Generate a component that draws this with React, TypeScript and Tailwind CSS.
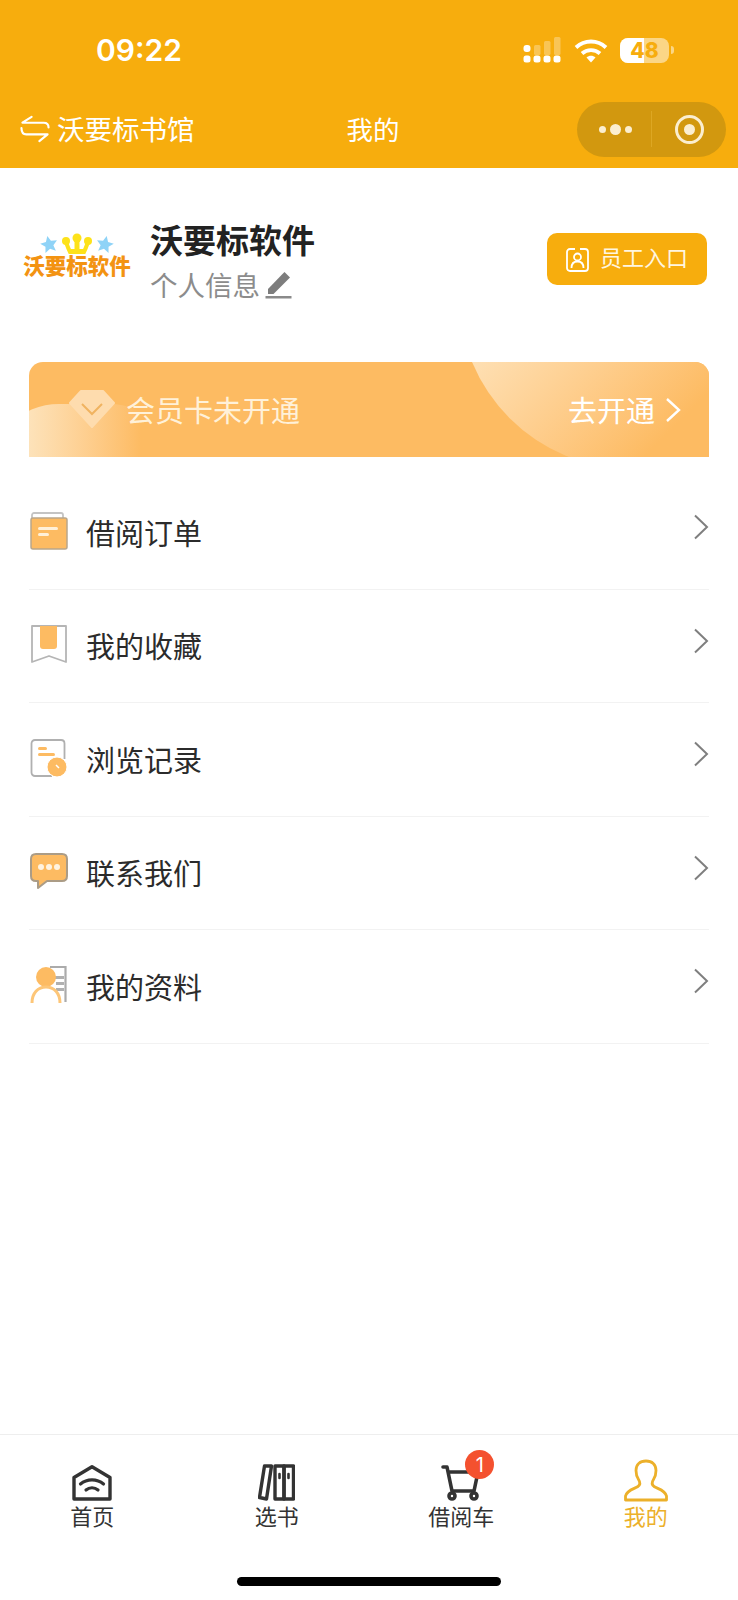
// ─── Status bar drawings ──────────────────────────────────────────────────────

function SignalIcon() {
  return (
    <svg width="40" height="26" viewBox="0 0 40 26">
      <g fill="#fff" opacity="0.3">
        <rect x="12" y="8" width="6.500" height="10" rx="1.500" />
        <rect x="22" y="4" width="6.500" height="14" rx="1.500" />
        <rect x="32" y="0" width="6.500" height="18" rx="1.500" />
      </g>
      <g fill="#fff">
        <rect x="1.500" y="8" width="7" height="7" rx="3" />
        <rect x="1.500" y="18.500" width="7" height="7" rx="2.500" />
        <rect x="11.500" y="18.500" width="7" height="7" rx="2.500" />
        <rect x="21.500" y="18.500" width="7" height="7" rx="2.500" />
        <rect x="31.500" y="18.500" width="7" height="7" rx="2.500" />
      </g>
    </svg>
  );
}

function WifiIcon() {
  return (
    <svg width="34" height="25" viewBox="0 0 34 25" fill="none" stroke="#fff" strokeWidth="3.800">
      <path d="M2 9.500C10.500 1.500 23.500 1.500 32 9.500" />
      <path d="M8 15.500C13 11 21 11 26 15.500" />
      <path d="M12.500 19.500L17 24.500L21.500 19.500C19 17.200 15 17.200 12.500 19.500Z" fill="#fff" stroke="none" />
    </svg>
  );
}

function Battery() {
  return (
    <div className="flex items-center gap-[2px]">
      <div className="relative h-[25px] w-[49px] overflow-hidden rounded-[8px] bg-white/50">
        <div className="h-full w-[24px] bg-white" />
        <span className="absolute inset-0 flex items-center justify-center text-[21px] font-extrabold leading-none text-[#f7ad0d] [font-family:Inter,sans-serif]">
          48
        </span>
      </div>
      <div className="h-[8px] w-[3px] rounded-r-full bg-white/50" />
    </div>
  );
}

function BackHomeIcon() {
  return (
    <svg width="30" height="28" viewBox="0 0 31 28" fill="none" stroke="#fff" strokeWidth="2.200" strokeLinecap="round" strokeLinejoin="round">
      <path d="M12 1.500L2.500 7.500H24.500C27.500 7.500 29.500 9.500 29.500 12.500" />
      <path d="M1.500 13C1.500 17 3.500 19.500 6.500 19.500H28.500L20 26.500" />
    </svg>
  );
}

// ─── Logo ─────────────────────────────────────────────────────────────────────

function Star({ rotate }: { rotate: number }) {
  return (
    <svg width="18" height="18" viewBox="0 0 24 24" style={{ transform: `rotate(${rotate}deg)` }}>
      <path d="M12 1l3.400 7.400 8 .9-6 5.400 1.700 8L12 18.600l-7.100 4.100 1.700-8-6-5.400 8-.9z" fill="#8fd3f7" />
    </svg>
  );
}

function Logo() {
  return (
    <div className="flex w-[108px] flex-col items-center">
      <div className="flex items-center gap-[3px]">
        <Star rotate={-12} />
        <svg width="32" height="21" viewBox="0 0 32 21">
          <path d="M5 9C7 15 8 17 9.500 20H22.500C24 17 25 15 27 9" stroke="#fde21a" strokeWidth="4" fill="none" />
          <path d="M8 18H24" stroke="#fde21a" strokeWidth="4" />
          <path d="M16 6V18" stroke="#fde21a" strokeWidth="5" />
          <circle cx="5" cy="8" r="4" fill="#fde21a" />
          <circle cx="16" cy="5" r="4.500" fill="#fde21a" />
          <circle cx="27" cy="8" r="4" fill="#fde21a" />
        </svg>
        <Star rotate={12} />
      </div>
      <span className="-mt-[1px] whitespace-nowrap text-[21.500px] font-black leading-[24px] text-[#f39312]">
        沃要标软件
      </span>
    </div>
  );
}

// ─── Menu icons ───────────────────────────────────────────────────────────────

function OrderIcon() {
  return (
    <svg width="38" height="38" viewBox="0 0 38 38" fill="none">
      <path d="M2 6V3C2 2 3 1 4 1H31C32 1 33 2 33 3V6" stroke="#c4c4c4" strokeWidth="1.800" />
      <rect x="1" y="6" width="36" height="31" rx="2" fill="#fdbb62" stroke="#b9a68a" strokeWidth="1.500" />
      <rect x="8" y="15" width="20" height="3" rx="1.500" fill="#fff0d8" />
      <rect x="8" y="21" width="11" height="3" rx="1.500" fill="#fff0d8" />
    </svg>
  );
}

function FavoriteIcon() {
  return (
    <svg width="38" height="38" viewBox="0 0 38 38" fill="none">
      <path d="M2 1H36V37L19 31L2 37Z" stroke="#b5b5b5" strokeWidth="1.800" strokeLinejoin="round" />
      <path d="M10 1H27V21C27 23 26 24 24 24H13C11 24 10 23 10 21Z" fill="#fdbb62" />
    </svg>
  );
}

function HistoryIcon() {
  return (
    <svg width="38" height="38" viewBox="0 0 38 38" fill="none">
      <path d="M22 37H5C3 37 1.500 35.500 1.500 33.500V4.500C1.500 2.500 3 1 5 1H31C33 1 34.500 2.500 34.500 4.500V20" stroke="#b0b0b0" strokeWidth="1.800" />
      <rect x="8" y="8" width="9" height="3" rx="1.500" fill="#fdbb62" />
      <rect x="8" y="14" width="17" height="3" rx="1.500" fill="#fdbb62" />
      <circle cx="27" cy="28" r="10" fill="#fdbb62" stroke="#fff" strokeWidth="1" />
      <path d="M26 26L29 29" stroke="#fff" strokeWidth="1.500" />
    </svg>
  );
}

function ContactIcon() {
  return (
    <svg width="38" height="36" viewBox="0 0 38 36" fill="none">
      <path d="M6 1H32C35 1 37 3 37 6V23C37 26 35 28 32 28H17L8 35V28H6C3 28 1 26 1 23V6C1 3 3 1 6 1Z" fill="#fdbb62" stroke="#ab9c86" strokeWidth="2" strokeLinejoin="round" />
      <circle cx="11" cy="14" r="3" fill="#fff3e0" />
      <circle cx="19" cy="14" r="3" fill="#fff3e0" />
      <circle cx="27" cy="14" r="3" fill="#fff3e0" />
    </svg>
  );
}

function ProfileIcon() {
  return (
    <svg width="38" height="38" viewBox="0 0 38 38" fill="none">
      <path d="M20 1H35.500V36" stroke="#ababab" strokeWidth="2.200" />
      <rect x="25" y="10" width="9" height="3" fill="#b0b0b0" />
      <rect x="26" y="16" width="8" height="3" fill="#b0b0b0" />
      <rect x="26" y="22" width="8" height="3" fill="#b0b0b0" />
      <circle cx="16" cy="11" r="10" fill="#fdbb62" />
      <path d="M2 37C2 27 8 21 16 21C24 21 30 27 30 37" stroke="#fdc678" strokeWidth="3" />
    </svg>
  );
}

function MenuChevron() {
  return (
    <svg className="mb-[10px] shrink-0" width="16" height="26" viewBox="0 0 16 26" fill="none" stroke="#7f7f7f" strokeWidth="2">
      <path d="M2 1.500L14 13L2 24.500" />
    </svg>
  );
}

// ─── Tab icons ────────────────────────────────────────────────────────────────

function HomeTabIcon() {
  return (
    <svg width="40" height="36" viewBox="0 0 40 36" fill="none" stroke="#333" strokeLinecap="round">
      <path d="M2 34V12.500L20 1.800L38 12.500V34Z" strokeWidth="3.400" strokeLinejoin="round" />
      <path d="M8.500 19C15 13.500 25 13.500 31.500 19" strokeWidth="3.200" />
      <path d="M14 25C17.500 22 22.500 22 26 25" strokeWidth="3.200" />
    </svg>
  );
}

function BooksTabIcon() {
  return (
    <svg width="37" height="37" viewBox="0 0 37 37" fill="none" stroke="#333" strokeWidth="3.400" strokeLinejoin="round">
      <path d="M6.500 2H13.500L8.500 35L1.500 33.500Z" />
      <rect x="17" y="2" width="9" height="33" />
      <rect x="26" y="2" width="9.500" height="33" />
      <path d="M21.500 10V14M30.500 10V14" strokeLinecap="round" strokeWidth="2.600" />
    </svg>
  );
}

function CartTabIcon() {
  return (
    <svg width="40" height="36" viewBox="0 0 40 36" fill="none" stroke="#333" strokeLinecap="round" strokeLinejoin="round">
      <path d="M2 2H6L11 26H33L37 7H8" strokeWidth="3.600" />
      <circle cx="11" cy="31" r="3" strokeWidth="3.600" />
      <circle cx="33" cy="31" r="3" strokeWidth="3.600" />
    </svg>
  );
}

function MeTabIcon({ color }: { color: string }) {
  return (
    <svg className="translate-y-[1px]" width="44" height="44" viewBox="0 0 44 44" fill="none" stroke={color} strokeWidth="2.800" strokeLinejoin="round">
      <path d="M22 3C16 3 12 6.500 12 12.500C12 16 12.500 18.500 14.500 21.500C16.500 24.500 16.500 26.500 14 28.500C10 31 3 32 1.500 38V42H42.500V38C41 32 34 31 30 28.500C27.500 26.500 27.500 24.500 29.500 21.500C31.500 18.500 32 16 32 12.500C32 6.500 28 3 22 3Z" />
    </svg>
  );
}

// ─── Data ─────────────────────────────────────────────────────────────────────

const MENU_ITEMS = [
  { label: "借阅订单", icon: OrderIcon },
  { label: "我的收藏", icon: FavoriteIcon },
  { label: "浏览记录", icon: HistoryIcon },
  { label: "联系我们", icon: ContactIcon },
  { label: "我的资料", icon: ProfileIcon },
];

// ─── Page ─────────────────────────────────────────────────────────────────────

export default function App() {
  return (
    <div className="flex h-[1600px] w-[738px] flex-col overflow-hidden bg-white [font-family:'Noto_Sans_CJK_SC',sans-serif]">
      {/* Status bar + nav bar */}
      <header className="h-[168px] shrink-0 bg-[#f7ad0d] text-white">
        <div className="flex h-[100px] items-start justify-between pl-[96px] pr-[64px] pt-[33px]">
          <span className="text-[30px] font-semibold leading-[35px] [font-family:Inter,sans-serif]">09:22</span>
          <div className="flex items-center gap-[12px] pt-[4px]">
            <SignalIcon />
            <WifiIcon />
            <Battery />
          </div>
        </div>
        <div className="grid h-[58px] grid-cols-[1fr_auto_1fr] items-center pl-[20px] pr-[12px]">
          <div className="flex items-center gap-[7px]">
            <BackHomeIcon />
            <span className="text-[27.500px] leading-none">沃要标书馆</span>
          </div>
          <span className="text-[26.500px] leading-none">我的</span>
          <div className="flex justify-end">
            <div className="flex h-[55px] w-[149px] items-center rounded-full bg-[#d2980f]">
              <div className="flex flex-1 items-center justify-center gap-[4px] pl-[2px]">
                <span className="h-[7px] w-[7px] rounded-full bg-[#fbeed0]" />
                <span className="h-[11px] w-[11px] rounded-full bg-[#fbeed0]" />
                <span className="h-[7px] w-[7px] rounded-full bg-[#fbeed0]" />
              </div>
              <div className="h-[36px] w-px bg-[#dda723]" />
              <div className="flex w-[74px] items-center justify-center">
                <div className="flex h-[29px] w-[29px] items-center justify-center rounded-full border-[3px] border-[#fbeed0]">
                  <span className="h-[11px] w-[11px] rounded-full bg-[#fbeed0]" />
                </div>
              </div>
            </div>
          </div>
        </div>
      </header>

      {/* Profile */}
      <section className="flex h-[194px] shrink-0 items-start pl-[23px] pr-[31px] pt-[52px]">
        <div className="pt-[13px]">
          <Logo />
        </div>
        <div className="ml-[19px] flex-1">
          <div className="text-[33px] font-bold leading-[38px] text-[#222]">沃要标软件</div>
          <div className="mt-[8px] flex items-center gap-[5px] text-[27.500px] leading-[36px] text-[#8c8c8c]">
            <span>个人信息</span>
            <svg width="27" height="30" viewBox="0 0 27 30">
              <path d="M3 20L17 5.500L19.500 3L25 8.500L22.500 11L8.500 25H3Z" fill="#7d7d7d" />
              <rect x="0.500" y="27" width="26" height="2.500" fill="#8a8a8a" />
            </svg>
          </div>
        </div>
        <button className="mt-[13px] flex h-[52px] w-[160px] items-center justify-center gap-[11px] rounded-[10px] bg-[#f7ad0d] text-[22px] leading-none text-[#fff6e0]">
          <svg width="23" height="25" viewBox="0 0 23 25" fill="none" stroke="#fff" strokeWidth="1.800">
            <rect x="1" y="2" width="21" height="22" rx="3" />
            <circle cx="11.500" cy="10" r="3.500" />
            <path d="M5.500 21C5.500 16.500 8 14.500 11.500 14.500C15 14.500 17.500 16.500 17.500 21" />
            <path d="M9 2H14" strokeWidth="2.500" stroke="#f7ad0d" />
          </svg>
          <span className="-mt-[6px]">员工入口</span>
        </button>
      </section>

      {/* Member card */}
      <section className="relative mx-[29px] flex h-[95px] shrink-0 items-center justify-between overflow-hidden rounded-t-[14px] bg-[#fdbb62] pl-[97px] pr-[28px]">
        <div className="absolute left-[-40px] top-[42px] h-[140px] w-[190px] rounded-full bg-gradient-to-r from-[#fde3bb] from-20% to-[#fdbb62] to-80%" />
        <div className="absolute left-[430px] top-[-239px] h-[346px] w-[346px] rounded-full bg-gradient-to-br from-[#fee0b4] from-36% to-[#fdbb62] to-75%" />
        <svg className="absolute left-[40px] top-[28px]" width="46" height="38" viewBox="0 0 46 38">
          <path d="M12 1H34L45 13L23 37L1 13Z" fill="#fedcae" stroke="#fedcae" strokeWidth="2" strokeLinejoin="round" />
          <path d="M13 14L23 24L33 14" fill="none" stroke="#f0b360" strokeWidth="2" />
        </svg>
        <span className="relative text-[29px] leading-none text-[#fff1d9]">会员卡未开通</span>
        <div className="relative flex items-center gap-[10px] text-[29px] leading-none text-white">
          <span>去开通</span>
          <svg width="16" height="26" viewBox="0 0 16 26" fill="none" stroke="#fff" strokeWidth="2.400">
            <path d="M2 2L14 13L2 24" />
          </svg>
        </div>
      </section>

      {/* Menu list */}
      <ul className="mx-[29px] mt-[19px] flex flex-col">
        {MENU_ITEMS.map((item) => (
          <li
            key={item.label}
            className="flex h-[113.500px] items-center border-b border-[#f2f2f2]"
          >
            <div className="flex w-[39px] justify-center pb-[3px]">
              <item.icon />
            </div>
            <span className="ml-[18px] flex-1 text-[29px] leading-none text-[#2b2b2b]">{item.label}</span>
            <MenuChevron />
          </li>
        ))}
      </ul>

      {/* Tab bar */}
      <footer className="mt-auto flex h-[166px] shrink-0 flex-col border-t border-[#eeeeee]">
        <nav className="grid grid-cols-4 pt-[21px]">
          <div className="flex flex-col items-center">
            <div className="flex h-[46px] items-end pb-[1px]"><HomeTabIcon /></div>
            <span className="-mt-[2px] text-[22px] leading-[30px] text-[#333]">首页</span>
          </div>
          <div className="flex flex-col items-center">
            <div className="flex h-[46px] items-end pb-[1px]"><BooksTabIcon /></div>
            <span className="-mt-[2px] text-[22px] leading-[30px] text-[#333]">选书</span>
          </div>
          <div className="flex flex-col items-center">
            <div className="relative flex h-[46px] items-end pb-[1px]">
              <CartTabIcon />
              <span className="absolute -right-[13px] top-[-6px] flex h-[29px] w-[29px] items-center justify-center rounded-full bg-[#f4512f] text-[20px] leading-none text-white [font-family:Inter,sans-serif]">
                1
              </span>
            </div>
            <span className="-mt-[2px] text-[22px] leading-[30px] text-[#333]">借阅车</span>
          </div>
          <div className="flex flex-col items-center">
            <div className="flex h-[46px] items-end pb-[1px]"><MeTabIcon color="#ecb02a" /></div>
            <span className="-mt-[2px] text-[22px] leading-[30px] text-[#ecb02a]">我的</span>
          </div>
        </nav>
        <div className="mx-auto mt-auto mb-[14px] h-[9px] w-[264px] rounded-full bg-black" />
      </footer>
    </div>
  );
}
